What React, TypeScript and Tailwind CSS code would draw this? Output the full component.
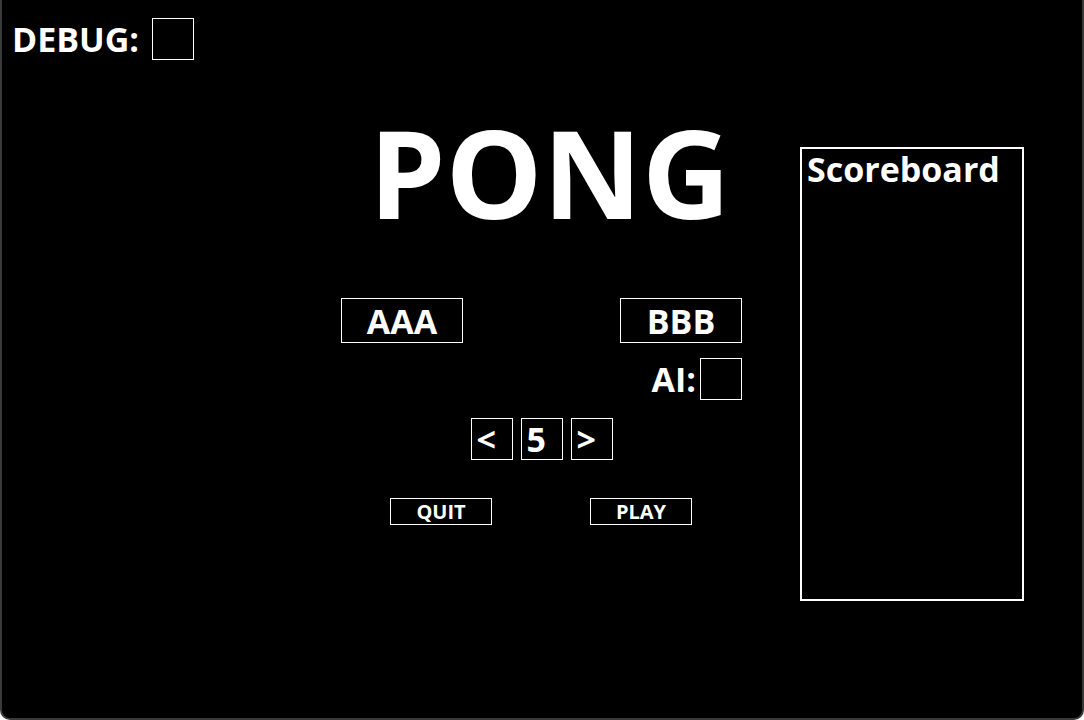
import { FC, ReactElement } from "react";

const Box: FC<{ children?: React.ReactNode; className?: string }> = ({ children, className = "" }) => (
  <div className={`flex items-center border border-white ${className}`}>{children}</div>
);

const App: FC = (): ReactElement => {
  return (
    <div className="h-[720px] w-full bg-black text-white font-['Open_Sans',sans-serif] font-bold border-x-2 border-b-2 border-[#3a3a3a] rounded-b-[10px] overflow-hidden">
      {/* top bar */}
      <div className="flex items-center gap-[13px] pl-[10px] pt-[18px]">
        <span className="text-[34px] leading-none">DEBUG:</span>
        <Box className="h-[42px] w-[42px]" />
      </div>

      <div className="grid grid-cols-[339px_401px_1fr]">
        <div />

        {/* main menu */}
        <div className="flex flex-col">
          <h1 className="mt-[51px] ml-[28px] text-[122px] leading-none">PONG</h1>

          <div className="mt-[65px] flex justify-between">
            <Box className="h-[45px] w-[122px] justify-center text-[34px] leading-none">AAA</Box>
            <Box className="h-[45px] w-[122px] justify-center text-[34px] leading-none">BBB</Box>
          </div>

          <div className="mt-[15px] flex items-center justify-end gap-[4px]">
            <span className="text-[34px] leading-none">AI:</span>
            <Box className="h-[42px] w-[42px]" />
          </div>

          <div className="mt-[18px] flex justify-center gap-[8px]">
            <Box className="h-[42px] w-[42px] pl-[5px] text-[34px] leading-none">&lt;</Box>
            <Box className="h-[42px] w-[42px] pl-[5px] text-[34px] leading-none">5</Box>
            <Box className="h-[42px] w-[42px] pl-[5px] text-[34px] leading-none">&gt;</Box>
          </div>

          <div className="mt-[38px] ml-[49px] flex gap-[98px]">
            <Box className="h-[27px] w-[102px] justify-center text-[20px] leading-none">QUIT</Box>
            <Box className="h-[27px] w-[102px] justify-center text-[20px] leading-none">PLAY</Box>
          </div>
        </div>

        {/* scoreboard */}
        <div className="flex justify-center">
          <div className="mt-[87px] h-[454px] w-[224px] border-2 border-white px-[5px]">
            <h2 className="text-[34px] leading-none pt-[3px]">Scoreboard</h2>
          </div>
        </div>
      </div>
    </div>
  );
};

export default App;
